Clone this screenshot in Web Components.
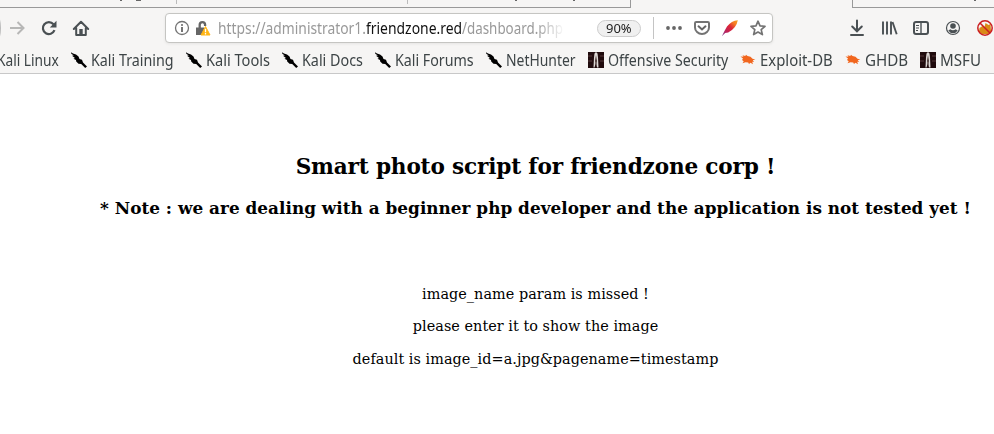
<!DOCTYPE html>
<html lang="en"><head><meta charset="utf-8"><title>Dashboard</title>
<style>html,body{margin:0;width:994px;height:434px;overflow:hidden;background:#fff}</style></head>
<body><browser-window></browser-window>
<script>
const icons = {
 forward:'<path d="M1 8h13M8.500 2l6 6-6 6" fill="none" stroke="#b7b7b6" stroke-width="2"/>',
 reload:'<path d="M13.500 10.200A6 6 0 1 1 12.500 4.200" fill="none" stroke="#4a5053" stroke-width="2.200"/><path d="M15.500 .8v6.700H8.800z" fill="#4a5053"/>',
 home:'<path d="M.8 9L8 1.800 15.200 9M3.200 8v7h9.600V8" fill="none" stroke="#4a5053" stroke-width="2" stroke-linejoin="round" stroke-linecap="round"/><path d="M6.300 9h3.400v6H6.300z" fill="#4a5053"/>',
 info:'<circle cx="8" cy="8" r="6.500" fill="none" stroke="#737373" stroke-width="1.300"/><circle cx="8" cy="4.900" r="1" fill="#666"/><path d="M8 7v5" stroke="#666" stroke-width="1.800"/>',
 lock:'<path d="M4.700 8V4.800a2.700 2.700 0 0 1 5.400 0V6" fill="none" stroke="#666" stroke-width="2.300"/><path d="M1 7.500h8V15H1z" fill="#666"/><path d="M10.500 6.500l4.500 8.500H6z" fill="#ffb515" stroke="#ffb515" stroke-linejoin="round"/><path d="M10.500 8.700v3.500M10.500 13.100v1.300" stroke="#fff" stroke-width="1.300"/>',
 dots:'<circle cx="2" cy="8" r="1.900"/><circle cx="8" cy="8" r="1.900"/><circle cx="14" cy="8" r="1.900"/>',
 pocket:'<path d="M2.200 2h11.600q1.200 0 1.200 1.200V7.500a7 6.500 0 0 1-14 0V3.200Q1 2 2.200 2z" fill="none" stroke="#737373" stroke-width="2"/><path d="M4.500 6.300L8 9.500l3.500-3.200" fill="none" stroke="#666" stroke-width="2" stroke-linecap="round"/>',
 feather:'<defs><linearGradient id="f" x1="1" y1="0" x2="0" y2="1"><stop stop-color="#f9a51f"/><stop offset=".22" stop-color="#f47a25"/><stop offset=".45" stop-color="#dc2637"/><stop offset=".7" stop-color="#c12157"/><stop offset="1" stop-color="#7c4698"/></linearGradient></defs><path d="M15.800 .2Q9.500 .8 5 6.500L2.200 11.500 0 16l3.200-3 3-.5Q14.500 8 15.800 .2z" fill="url(#f)"/>',
 star:'<path d="M8 1.200l2 4.600 5 .5-3.800 3.300 1.200 5L8 12l-4.400 2.600 1.200-5L1 6.300l5-.5z" fill="none" stroke="#737373" stroke-width="1.700" stroke-linejoin="round"/>',
 download:'<path d="M8 .5V11M3.200 6.500L8 11.300l4.800-4.800M2 15h12" fill="none" stroke="#4a5053" stroke-width="2" stroke-linecap="round"/>',
 library:'<path d="M2 1.500v13M6 1.500v13M10 1.500v13" stroke="#4a5053" stroke-width="1.900"/><path d="M11.500 2l4.200 12.300" stroke="#4a5053" stroke-width="1.900"/>',
 sidebar:'<rect x="1" y="2" width="14" height="12" rx="2" fill="none" stroke="#4a5053" stroke-width="2"/><path d="M8 2v12" stroke="#4a5053" stroke-width="1.400"/><path d="M3 5.500h3M3 8h3M3 10.500h2" stroke="#4a5053"/>',
 account:'<circle cx="8" cy="8" r="6.500" fill="none" stroke="#4a5053" stroke-width="1.200"/><circle cx="8" cy="6" r="2.800" fill="#4a5053"/><path d="M3.300 10.500l2-1.200q2.700 1.800 5.400 0l2 1.200Q11 13.200 8 13.200t-4.700-2.700z" fill="#4a5053"/>',
 blocked:'<path d="M2.500 8l3-2 2 1 1-4 3 2 2-1 .5 7-3 3-6 0-3-2z" fill="#d98a16"/><circle cx="8" cy="8" r="7.200" fill="none" stroke="#cb1e20" stroke-width="1.500"/><path d="M3 3l10 10" stroke="#cb1e20" stroke-width="1.500"/>',
 kali:'<path d="M0 .3l2 1.300 3 1 2.500 2L8.500 7l2.500.800 1 2.700 4 4-1.800 1.500-4-4-2.700-.2L5.200 9.500 5 8 2.500 6.700 4 6 1 3.800l1.800-.2L.3 1.800z" fill="#000"/>',
 offsec:'<path d="M0 0h16v16H0z" fill="#200b0d"/><path d="M0 4h4M0 9h4M12 4h4M12 9h4" stroke="#54393b" stroke-width="1.200"/><path d="M6.500 1.500L8 0l1.500 1.500.5 4 .5 10H9l-1-5-1.500 5H5.500l.5-10z" fill="#ddd8d5"/><path d="M8 3l.8 6-.8 5-.8-5z" fill="#27110f"/>',
 bug:'<path d="M.5 4.500l3 .3-1-1.600 2.800.8.700-1.200 1.500 1.200 3 .8 2 2 2.800.7-2.500.8 1.200 1.700-1.800-.3.800 2.500-2.500-1.400-1.500 1.200-.8-1.500-2.700-.2-3 1 1.200-2L2 8l1-1.500z" fill="#f1661e"/>'
};
function define(name, css, html, setup){
 customElements.define(name,class extends HTMLElement{connectedCallback(){
  if(this.shadowRoot)return;
  this.attachShadow({mode:'open'}).innerHTML='<style>:host{box-sizing:border-box}*{box-sizing:border-box}'+css+'</style>'+(typeof html==='function'?html(this):html);
  if(setup)setup(this);
 }});
}
define('ui-icon',':host{display:block;flex:none;width:16px;height:16px}svg{display:block;width:100%;height:100%;fill:#666;overflow:visible}',e=>`<svg viewBox="0 0 16 16">${icons[e.getAttribute('name')]}</svg>`);
/* Text runs keep a constant advance regardless of font metrics. */
define('fit-text',':host{display:block;flex:none;white-space:pre;overflow:visible}span{display:inline-block;transform-origin:0 50%}','<span><slot></slot></span>',e=>{
 const w=+e.getAttribute('w');e.style.width=w+'px';const s=e.shadowRoot.querySelector('span');
 requestAnimationFrame(()=>{s.style.transform=`scaleX(${w/s.offsetWidth})`});
});
/* Only the descenders of the tab titles reach into the visible strip. */
define('tab-strip',':host{display:flex;height:8px;overflow:hidden}.left{width:631px;border:solid #999;border-width:0 1px 1px 0;display:flex}.left>div{height:4px}.one{width:177px;border-right:1px solid #bbb;padding-left:120px;display:flex;gap:14px}.two{width:231px;border-right:1px solid #bbb}.three{padding-left:107px;display:flex;gap:56px}.right{margin-left:221px;width:142px;border:solid #999;border-width:0 0 1px 1px;padding-left:121px}i{display:block;width:2px;height:1px;background:#666}.g{width:5px}','<div class="left"><div class="one"><i></i><i class="g"></i></div><div class="two"></div><div class="three"><i></i><i></i></div></div><div class="right"><i></i></div>');
define('address-bar',':host{display:flex;align-items:center;width:608px;height:30px;border:1px solid #c5c5c2;border-radius:4px;background:#fff;box-shadow:0 1px 3px #0001;padding-left:8px;font:15.500px/24px "Noto Sans",sans-serif}.lock{margin:0 7px 0 5px}.url{display:flex;width:345px;height:24px;overflow:hidden;color:#999;-webkit-mask-image:linear-gradient(90deg,#000 318px,transparent 347px)}.url b{font-weight:400;color:#111}.zoom{width:44px;height:17px;margin-left:34px;border:1px solid #ccc;border-radius:9px;background:#f0f0f0;color:#222;font-size:12px;line-height:15px;padding-left:8px}.line{width:1px;height:22px;background:#c4c4c4;margin:0 12px}.acts{display:flex;gap:12px}',
 '<ui-icon name="info"></ui-icon><ui-icon class="lock" name="lock"></ui-icon><div class="url"><fit-text w="148">https://administrator1.</fit-text><b><fit-text w="96">friendzone.red</fit-text></b><fit-text w="101">/dashboard.php</fit-text></div><div class="zoom"><fit-text w="26">90%</fit-text></div><div class="line"></div><div class="acts"><ui-icon name="dots"></ui-icon><ui-icon name="pocket"></ui-icon><ui-icon name="feather"></ui-icon><ui-icon name="star"></ui-icon></div>');
define('nav-bar',':host{display:flex;align-items:center;height:40px}.back{width:10px;height:28px;margin-left:-9px;border:1px solid #bbb;border-radius:50%}.nav{display:flex;gap:16px;margin-left:8px;width:156px}.tools{display:flex;gap:16px;margin-left:76px}',
 '<div class="back"></div><div class="nav"><ui-icon name="forward"></ui-icon><ui-icon name="reload"></ui-icon><ui-icon name="home"></ui-icon></div><address-bar></address-bar><div class="tools"><ui-icon name="download"></ui-icon><ui-icon name="library"></ui-icon><ui-icon name="sidebar"></ui-icon><ui-icon name="account"></ui-icon><ui-icon name="blocked"></ui-icon></div>');
define('book-mark',':host{display:flex;align-items:center;gap:4px;flex:none}','<ui-icon></ui-icon><slot></slot>',e=>{
 const i=e.shadowRoot.querySelector('ui-icon');const n=document.createElement('ui-icon');n.setAttribute('name',e.getAttribute('icon'));i.replaceWith(n);
});
define('bookmark-bar',':host{display:flex;align-items:center;height:24px;color:#3d4446;font:15.500px/22px "Noto Sans",sans-serif;gap:12px}.first{margin-left:-3px}',()=>{
 const a=[['kali','Kali Training',83],['kali','Kali Tools',64],['kali','Kali Docs',61],['kali','Kali Forums',79],['kali','NetHunter',70],['offsec','Offensive Security',120],['bug','Exploit-DB',73],['bug','GHDB',43],['offsec','MSFU',41]];
 return '<fit-text class="first" w="62">Kali Linux</fit-text>'+a.map(x=>`<book-mark icon="${x[0]}"><fit-text w="${x[2]}">${x[1]}</fit-text></book-mark>`).join('');
});
define('page-content',':host{display:block;width:871px;margin-left:100px;padding-top:78px;color:#000;font-family:"DejaVu Serif",serif;text-align:center;white-space:nowrap}h1{font-size:21.600px;letter-spacing:-.170px;line-height:30px;margin:0}h2{font-size:16.850px;letter-spacing:.022px;line-height:22px;margin:15px 0 66px}p{font-size:14.400px;letter-spacing:.050px;line-height:18px;margin:0 0 14.300px}','<h1>Smart photo script for friendzone corp !</h1><h2>* Note : we are dealing with a beginner php developer and the application is not tested yet !</h2><p>image_name param is missed !</p><p>please enter it to show the image</p><p>default is image_id=a.jpg&amp;pagename=timestamp</p>');
define('browser-window',':host{display:block;width:994px;height:434px;overflow:hidden}header{height:74px;background:#f6f5f4;border-bottom:1px solid #c8c8c8}','<header><tab-strip></tab-strip><nav-bar></nav-bar><bookmark-bar></bookmark-bar></header><page-content></page-content>');
</script></body></html>
